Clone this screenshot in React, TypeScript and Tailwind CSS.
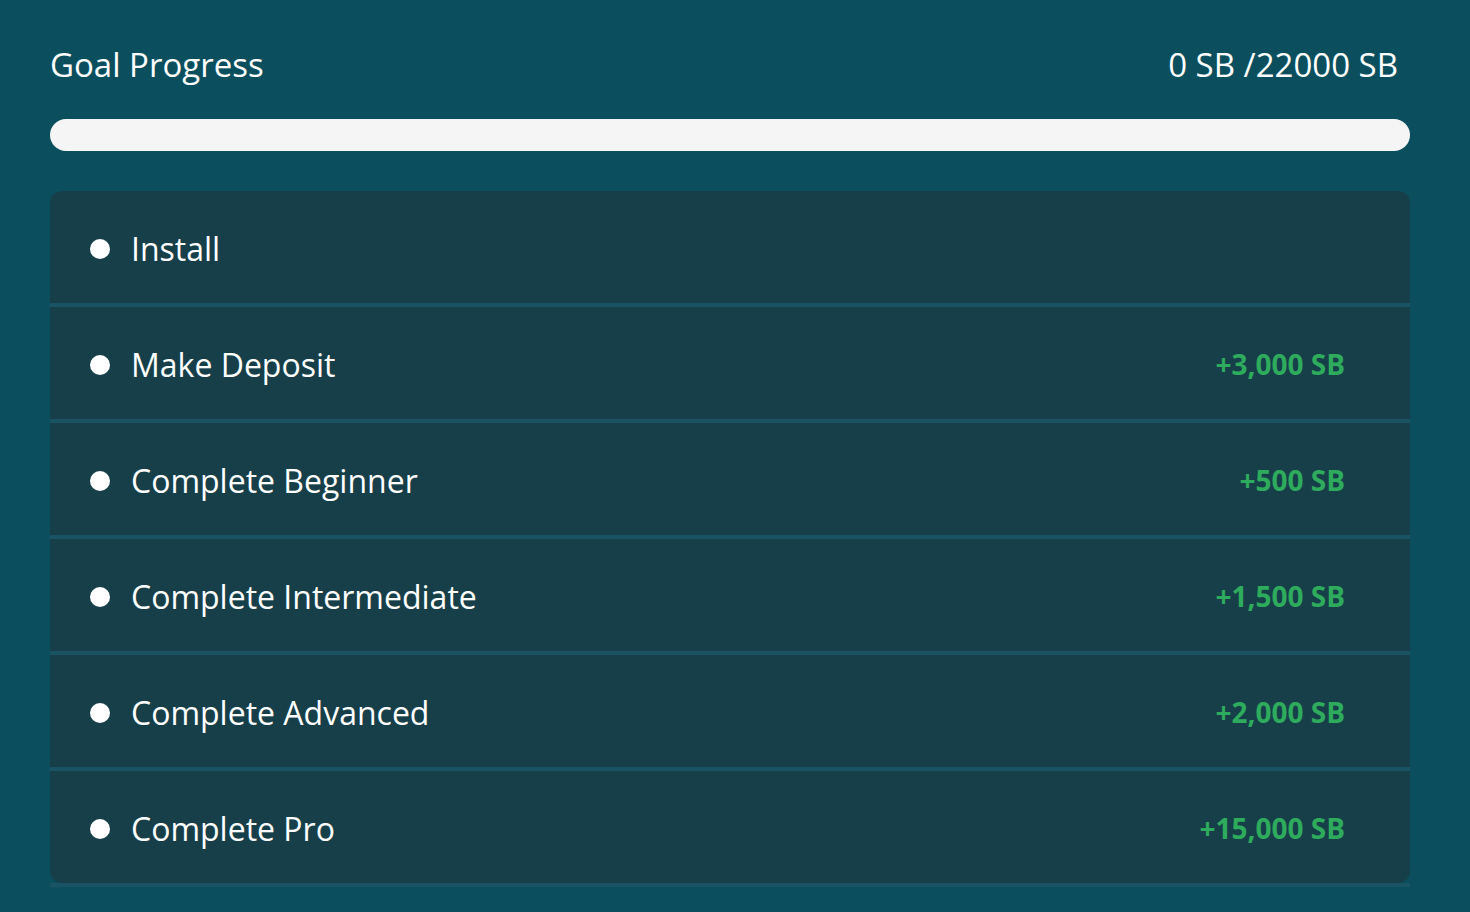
type Goal = {
  id: number;
  label: string;
  reward?: string;
};

const goals: Goal[] = [
  { id: 1, label: "Install" },
  { id: 2, label: "Make Deposit", reward: "+3,000 SB" },
  { id: 3, label: "Complete Beginner", reward: "+500 SB" },
  { id: 4, label: "Complete Intermediate", reward: "+1,500 SB" },
  { id: 5, label: "Complete Advanced", reward: "+2,000 SB" },
  { id: 6, label: "Complete Pro", reward: "+15,000 SB" },
];

export default function App() {
  return (
    <div
      className="min-h-screen bg-[#0b4f5e] pl-[50px] pr-[60px] pt-[42px] text-white"
      style={{ fontFamily: '"Open Sans", "Noto Sans", sans-serif' }}
    >
      <div className="flex items-center justify-between pr-3 text-[33px] leading-[45px]">
        <span>Goal Progress</span>
        <span>0 SB /22000 SB</span>
      </div>

      <div className="mt-[32px] h-8 w-full rounded-full bg-[#f5f5f5]" />

      <div className="mt-10 flex flex-col">
        {goals.map((goal, i) => {
          const isFirst = i === 0;
          const isLast = i === goals.length - 1;
          return (
            <div key={goal.id}>
              <div
                className={`flex h-[112px] items-center justify-between bg-[#173f4a] pl-10 pr-[65px] ${
                  isFirst ? "rounded-t-xl" : ""
                } ${isLast ? "rounded-b-xl" : ""}`}
              >
                <div className="flex items-center">
                  <span className="mt-1 h-5 w-5 rounded-full bg-white" />
                  <span className="ml-[21px] mt-1 text-[32px] leading-[44px]">{goal.label}</span>
                </div>
                {goal.reward && (
                  <span className="mt-[2px] text-[28px] font-bold leading-[38px] text-[#2eab5c]">{goal.reward}</span>
                )}
              </div>
              <div className="h-1 bg-[#1a5364]" />
            </div>
          );
        })}
      </div>
    </div>
  );
}
